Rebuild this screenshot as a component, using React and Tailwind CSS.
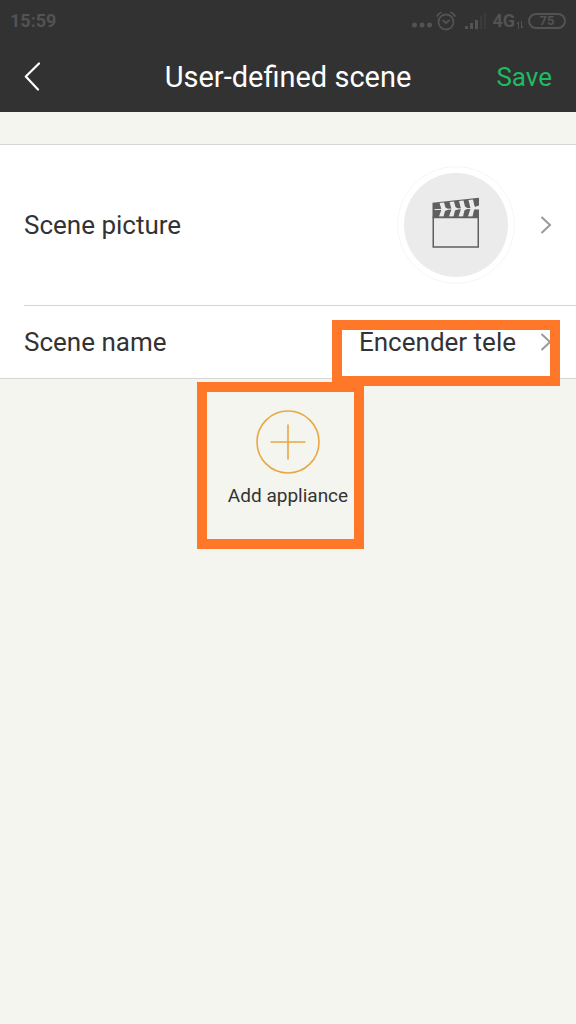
import React from 'react';

const BackIcon = () => (
  <svg className="h-8 w-4" viewBox="0 0 16 32" fill="none" stroke="currentColor" strokeWidth="2.2" strokeLinecap="round" strokeLinejoin="round">
    <path d="M15 3.5 L1.8 16.5 L14 29.5" />
  </svg>
);

const ChevronIcon = () => (
  <svg className="h-5 w-3 shrink-0 text-[#999999]" viewBox="0 0 12 20" fill="none" stroke="currentColor" strokeWidth="2">
    <path d="M1.5 2 L10 10 L1.5 18" />
  </svg>
);

const AlarmIcon = () => (
  <svg className="h-5 w-5" viewBox="0 0 20 20" fill="none" stroke="currentColor" strokeWidth="1.8" strokeLinecap="round">
    <circle cx="10" cy="11" r="7.5" />
    <path d="M7 9.5 L10 12 L13 9.5" />
    <path d="M1.2 5 Q2.5 2.5 5 1.5 M15 1.5 Q17.5 2.5 18.8 5" />
  </svg>
);

const SignalIcon = () => (
  <svg className="h-4 w-6" viewBox="0 0 24 16" fill="currentColor">
    <rect x="1" y="13" width="3" height="3" />
    <rect x="6" y="10" width="3" height="6" />
    <rect x="11" y="7" width="3" height="9" />
    <rect x="16" y="3" width="2" height="13" opacity="0.3" />
    <rect x="20" y="0" width="2" height="16" opacity="0.3" />
  </svg>
);

const ClapperIcon = () => (
  <svg className="mb-1 h-[52px] w-12" viewBox="0 0 48 52">
    <path d="M0.5 5.8 L47 0.8 V8.5 L44 9.5 V12.5 H47 V21 H0.5 Z" fill="#5f5f5f" />
    <path
      d="M7.5 6 L12 5.5 L13.5 10.5 L16.5 12.5 L13 14 L11.5 19.5 H7 L9.5 12.5 Z M17.5 5 L22 4.5 L23.5 10 L26.5 12 L23 13.5 L21.5 19.5 H17 L19.5 12.2 Z M27 4 L31.5 3.5 L33 9.5 L36 11.5 L32.5 13.2 L31 19.5 H26.5 L29 12 Z M36.5 3 L41 2.5 L42.5 9 L45.5 11.2 L42 13 L40.5 19.5 H36 L38.5 11.5 Z"
      fill="#ebebeb"
    />
    <path d="M2.5 12.6 L47.5 11.2" stroke="#ebebeb" strokeWidth="1" />
    <rect x="1.25" y="20.5" width="45" height="29.5" fill="none" stroke="#5f5f5f" strokeWidth="1.5" />
  </svg>
);

const StatusBar = () => (
  <div className="flex h-10 items-center justify-between px-[10px] pt-px text-[#535353]">
    <span className="text-lg font-bold">15:59</span>
    <div className="flex items-center">
      <svg className="mr-1 mt-2 h-2 w-5" viewBox="0 0 20 8" fill="currentColor">
        <circle cx="2.5" cy="4" r="2.5" />
        <circle cx="10" cy="4" r="2.5" />
        <circle cx="17.5" cy="4" r="2.5" />
      </svg>
      <AlarmIcon />
      <span className="ml-2"><SignalIcon /></span>
      <span className="ml-1 text-lg font-bold">4G</span>
      <svg className="ml-px mt-2 h-2 w-2" viewBox="0 0 8 8" fill="none" stroke="currentColor">
        <path d="M2.5 8 V1 L1 3 M5.5 0 V7 L7 5" />
      </svg>
      <span className="ml-1 flex h-4 w-[38px] items-center justify-center rounded-full border-2 border-[#535353] text-[13px] font-bold">75</span>
    </div>
  </div>
);

const App = () => {
  return (
    <div className="min-h-screen bg-[#f4f5ee] font-[Roboto,sans-serif] text-[#333333]">
      <header className="bg-[#323232]">
        <StatusBar />
        <div className="grid h-[72px] grid-cols-[1fr_auto_1fr] items-center px-6 pt-[3px] text-white">
          <button type="button" aria-label="Back" className="justify-self-start pb-1">
            <BackIcon />
          </button>
          <h1 className="text-[29px]">User-defined scene</h1>
          <button type="button" className="justify-self-end text-[26px] text-[#1dbb62]">Save</button>
        </div>
      </header>

      <main className="pt-8">
        <section className="border-y border-[#d6d6d4] bg-white text-[26px]">
          <button type="button" className="flex h-40 w-full items-center px-6 text-left">
            <span className="flex-1">Scene picture</span>
            <span className="mr-[25px] flex size-[118px] items-center justify-center rounded-full border border-[#f6f6f6]">
              <span className="flex size-[104px] items-center justify-center rounded-full bg-[#ebebeb]">
                <ClapperIcon />
              </span>
            </span>
            <ChevronIcon />
          </button>
          <div className="ml-6 border-t border-[#d6d6d4]" />
          <div className="relative">
            <button type="button" className="flex h-[72px] w-full items-center px-6 text-left">
              <span className="flex-1">Scene name</span>
              <span className="mr-6">Encender tele</span>
              <ChevronIcon />
            </button>
            <div className="pointer-events-none absolute -bottom-2 right-4 z-10 h-[66px] w-[228px] border-10 border-[#ff7728]" />
          </div>
        </section>

        <div className="flex justify-center pt-[31px]">
          <button type="button" className="relative flex flex-col items-center gap-2 text-[19px]">
            <svg className="size-16" viewBox="0 0 64 64" fill="none" stroke="#e9a743" strokeWidth="1.6">
              <circle cx="32" cy="32" r="31" />
              <path d="M32 14.5 V49.5 M14.5 32 H49.5" />
            </svg>
            <span>Add appliance</span>
            <span className="pointer-events-none absolute -right-4 -top-7 size-[167px] border-10 border-[#ff7728]" />
          </button>
        </div>
      </main>
    </div>
  );
};

export default App;
